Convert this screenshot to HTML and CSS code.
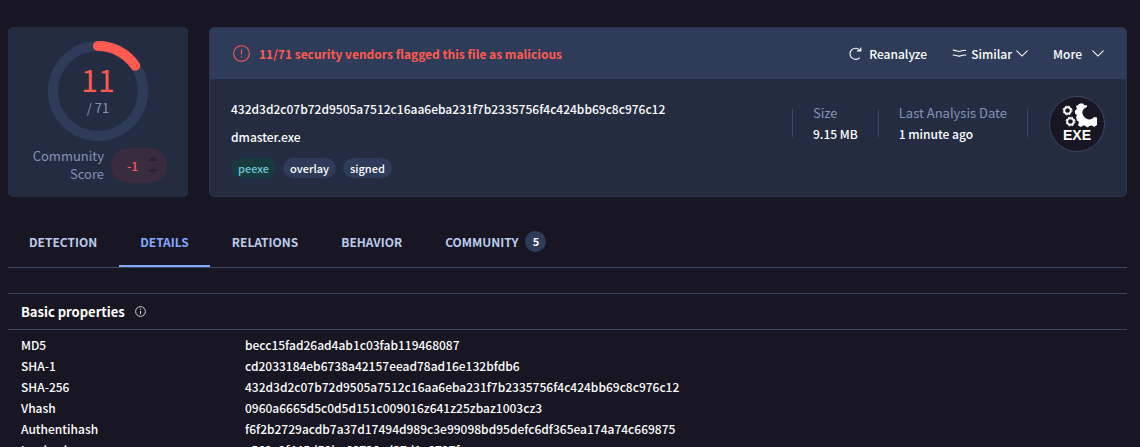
FILE: index.html
```html
<!DOCTYPE html>
<html lang="en">
<head>
    <meta charset="UTF-8">
    <meta name="viewport" content="width=device-width, initial-scale=1.0">
    <title>dmaster.exe</title>
    <link rel="stylesheet" href="styles.css">
</head>
<body>
    <div class="report">
        <section class="score-card">
            <div class="gauge">
                <svg class="gauge-ring" viewBox="0 0 100 100" aria-hidden="true">
                    <circle class="ring-track" cx="50" cy="50" r="45"/>
                    <circle class="ring-value" cx="50" cy="50" r="45" pathLength="71" stroke-dasharray="11 60" transform="rotate(-90 50 50)"/>
                </svg>
                <div class="gauge-text">
                    <span class="positives">11</span>
                    <span class="total">/ 71</span>
                </div>
            </div>
            <div class="community">
                <span class="community-label">Community Score</span>
                <div class="votes">
                    <span>-1</span>
                    <svg width="10" height="20" viewBox="0 0 10 20" aria-hidden="true"><path d="M0 6L5 1L10 6ZM0 14L5 19L10 14Z" fill="#282235"/></svg>
                </div>
            </div>
        </section>

        <section class="file-card">
            <header class="file-header">
                <svg class="alert-icon" width="17" height="17" viewBox="0 0 17 17" aria-hidden="true"><circle cx="8.5" cy="8.5" r="7.8"/><path d="M8.5 4.5v5M8.5 11.3v1.2"/></svg>
                <strong class="verdict">11/71 security vendors flagged this file as malicious</strong>
                <div class="actions">
                    <button type="button" class="reanalyze"><svg width="13" height="13" viewBox="0 0 13 13" aria-hidden="true"><path d="M10.7 10.6A5.6 5.6 0 1 1 10.9 3.2M11.8 .6V3.9H8"/></svg>Reanalyze</button>
                    <button type="button" class="similar"><svg width="15" height="8" viewBox="0 0 15 8" aria-hidden="true"><path d="M.8 1.3C3 .4 5 2.6 7.5 2.3S11 .4 14.2 1.5M.8 6.3C3 5.2 5 7.5 7.5 7.1S11 5.2 14.2 6.3"/></svg>Similar<svg class="caret" width="12" height="7" viewBox="0 0 12 7" aria-hidden="true"><path d="M.5 .7L6 6.1L11.5 .7"/></svg></button>
                    <button type="button" class="more">More<svg class="caret" width="12" height="7" viewBox="0 0 12 7" aria-hidden="true"><path d="M.5 .7L6 6.1L11.5 .7"/></svg></button>
                </div>
            </header>
            <div class="file-body">
                <div class="file-id">
                    <div class="hash">432d3d2c07b72d9505a7512c16aa6eba231f7b2335756f4c424bb69c8c976c12</div>
                    <div class="filename">dmaster.exe</div>
                    <div class="tags">
                        <a href="#peexe" class="tag tag-type">peexe</a>
                        <a href="#overlay" class="tag">overlay</a>
                        <a href="#signed" class="tag">signed</a>
                    </div>
                </div>
                <div class="facts">
                    <div class="fact"><span class="fact-label">Size</span><span>9.15 MB</span></div>
                    <div class="fact fact-date"><span class="fact-label">Last Analysis Date</span><span>1 minute ago</span></div>
                    <div class="file-type">
                        <svg width="42" height="25" viewBox="0 0 42 25" aria-hidden="true">
                            <g fill="none" stroke="#fff" stroke-width="1.9"><circle cx="11.5" cy="7.5" r="3.3"/><circle cx="14.5" cy="18.5" r="3.3"/></g>
                            <g fill="none" stroke="#fff" stroke-width="1" stroke-dasharray="1.8 1.8"><circle cx="11.5" cy="7.5" r="4.5"/><circle cx="14.5" cy="18.5" r="4.5"/></g>
                            <path fill="#fff" d="M22 2L24 .5L27 .5L28 2L31 2.5L31 4C26 6 25 10 28 13.5C31 17.5 36 17 38 14L41 14.5L41 22L38 24L36 22.5L33 23L32 24.5L29 23L28 22L25 24L22 22.5L23 19L21 17.5L20 14L21 12L19 10.5L19 7.5L21 6L20 3Z"/>
                        </svg>
                        <span>EXE</span>
                    </div>
                </div>
            </div>
        </section>
    </div>

    <nav class="tabs">
        <a href="#detection">Detection</a>
        <a href="#details" class="active" aria-current="page">Details</a>
        <a href="#relations">Relations</a>
        <a href="#behavior">Behavior</a>
        <a href="#community">Community<span class="count">5</span></a>
    </nav>

    <section class="properties">
        <h2>Basic properties
            <svg width="11" height="11" viewBox="0 0 11 11" aria-hidden="true"><circle cx="5.5" cy="5.5" r="4.9"/><path d="M5.5 2.5v1.2M5.5 4.8v3.5"/></svg>
        </h2>
        <table>
            <tr><th scope="row">MD5</th><td>becc15fad26ad4ab1c03fab119468087</td></tr>
            <tr><th scope="row">SHA-1</th><td>cd2033184eb6738a42157eead78ad16e132bfdb6</td></tr>
            <tr><th scope="row">SHA-256</th><td>432d3d2c07b72d9505a7512c16aa6eba231f7b2335756f4c424bb69c8c976c12</td></tr>
            <tr><th scope="row">Vhash</th><td>0960a6665d5c0d5d151c009016z641z25zbaz1003cz3</td></tr>
            <tr><th scope="row">Authentihash</th><td>f6f2b2729acdb7a37d17494d989c3e99098bd95defc6df365ea174a74c669875</td></tr>
            <tr><th scope="row">Imphash</th><td>c569e9f445d59ba68728cd37d1a8797f</td></tr>
        </table>
    </section>
</body>
</html>
```

FILE: styles.css
```css
* {
    box-sizing: border-box;
}
html {
    overflow: hidden;
}
body {
    margin: 0;
    padding: 27px 13px 0 8px;
    background-color: #171622;
    color: #fff;
    font-family: "Noto Sans CJK SC", "Noto Sans", sans-serif;
    font-size: 12px;
    font-weight: 500;
    line-height: 21px;
}
a {
    color: inherit;
    text-decoration: none;
}
svg {
    flex: none;
}
button {
    display: flex;
    align-items: center;
    padding: 0;
    border: none;
    background: none;
    color: #fff;
    font: inherit;
    cursor: pointer;
}
button svg {
    fill: none;
    stroke: #fff;
    stroke-width: 1.1;
}
.report {
    display: flex;
    gap: 21px;
}

/* Score */
.score-card {
    width: 180px;
    flex: none;
    padding-top: 14px;
    border-radius: 5px;
    background-color: #242c42;
}
.gauge {
    display: grid;
    width: 100px;
    height: 100px;
    margin: 0 auto;
}
.gauge-ring, .gauge-text {
    grid-area: 1 / 1;
}
.gauge-ring circle {
    fill: none;
    stroke-width: 10;
}
.ring-track {
    stroke: #2e3c59;
}
.ring-value {
    stroke: #ff5a50;
    stroke-linecap: round;
}
.gauge-text {
    display: flex;
    flex-direction: column;
    align-items: center;
    padding-top: 20px;
}
.positives {
    color: #ff5a50;
    font-size: 30px;
    font-weight: 400;
    line-height: 37px;
}
.total {
    color: #8293b8;
    font-size: 13px;
    font-weight: 400;
    line-height: 20px;
}
.community {
    display: flex;
    align-items: center;
    gap: 7px;
    padding: 6px 21px 0 0;
    justify-content: flex-end;
}
.community-label {
    width: 80px;
    color: #8293b8;
    font-size: 13px;
    font-weight: 400;
    line-height: 18px;
    text-align: right;
}
.votes {
    display: flex;
    align-items: center;
    justify-content: flex-end;
    gap: 10px;
    width: 56px;
    height: 35px;
    padding-right: 9px;
    border-radius: 18px;
    background-color: #3a2c3f;
    color: #ff5a50;
}

/* File summary */
.file-card {
    flex: 1;
    min-width: 0;
    padding-bottom: 18px;
    border: 1px solid #2a334a;
    border-radius: 5px;
    background-color: #242c42;
    overflow: hidden;
}
.file-header {
    display: flex;
    align-items: center;
    height: 51px;
    padding: 0 22px 1px 23px;
    background-color: #2e3c59;
}
.alert-icon {
    fill: none;
    stroke: #ff5a50;
    stroke-width: 1.1;
}
.verdict {
    margin-left: 9px;
    color: #ff5a50;
    font-weight: 700;
}
.actions {
    display: flex;
    gap: 25px;
    margin-left: auto;
}
.reanalyze {
    gap: 7px;
}
.similar {
    gap: 4px;
}
.more {
    gap: 10px;
}
.file-body {
    display: flex;
    justify-content: space-between;
    padding: 16px 21px 0;
}
.hash {
    line-height: 28px;
}
.filename {
    line-height: 28px;
}
.tags {
    display: flex;
    gap: 7px;
    padding-top: 7px;
}
.tag {
    padding: 0 7px;
    border-radius: 10px;
    background-color: #2e3c59;
    font-size: 11px;
    line-height: 20px;
}
.tag-type {
    background-color: #183c3e;
    color: #6ac6d6;
}
.facts {
    display: flex;
    align-items: flex-start;
    padding-top: 1px;
}
.fact {
    display: flex;
    flex-direction: column;
    height: 28px;
    margin-top: 13px;
    padding: 0 20px;
    border-left: 1px solid #3b4865;
    justify-content: center;
}
.fact-date {
    border-right: 1px solid #3b4865;
}
.fact-label {
    color: #8293b8;
    font-size: 13px;
    font-weight: 400;
}
.file-type {
    display: flex;
    flex-direction: column;
    align-items: center;
    width: 56px;
    height: 56px;
    margin-left: 21px;
    padding-top: 6px;
    border: 1px solid #3b4865;
    border-radius: 50%;
    background-color: #171622;
}
.file-type span {
    font: bold 14px/15px "Liberation Sans", Arial, sans-serif;
}

/* Tabs */
.tabs {
    display: flex;
    gap: 1px;
    margin-top: 20px;
    border-bottom: 1px solid #3b4865;
    color: #bccbeb;
    font-weight: 700;
    text-transform: uppercase;
}
.tabs a {
    display: flex;
    align-items: center;
    height: 50px;
    padding: 0 21px;
    border-bottom: 2px solid transparent;
}
.tabs .active {
    border-color: #84a8ff;
    color: #84a8ff;
}
.count {
    width: 21px;
    margin-left: 7px;
    border-radius: 50%;
    background-color: #2e3c59;
    color: #fff;
    font-size: 11px;
    text-align: center;
}

/* Properties */
.properties {
    margin-top: 25px;
    border-top: 1px solid #3b4865;
}
.properties h2 {
    display: flex;
    align-items: center;
    gap: 10px;
    height: 36px;
    margin: 0 0 4px;
    padding: 0 0 1px 13px;
    border-bottom: 1px solid #3b4865;
    font-size: 13px;
}
.properties h2 svg {
    fill: none;
    stroke: #d0d0d6;
}
.properties table {
    width: 100%;
    border-collapse: collapse;
}
.properties th {
    width: 237px;
    padding: 0 0 0 13px;
    font-weight: 500;
    text-align: left;
}
.properties td {
    padding: 0;
}
```
